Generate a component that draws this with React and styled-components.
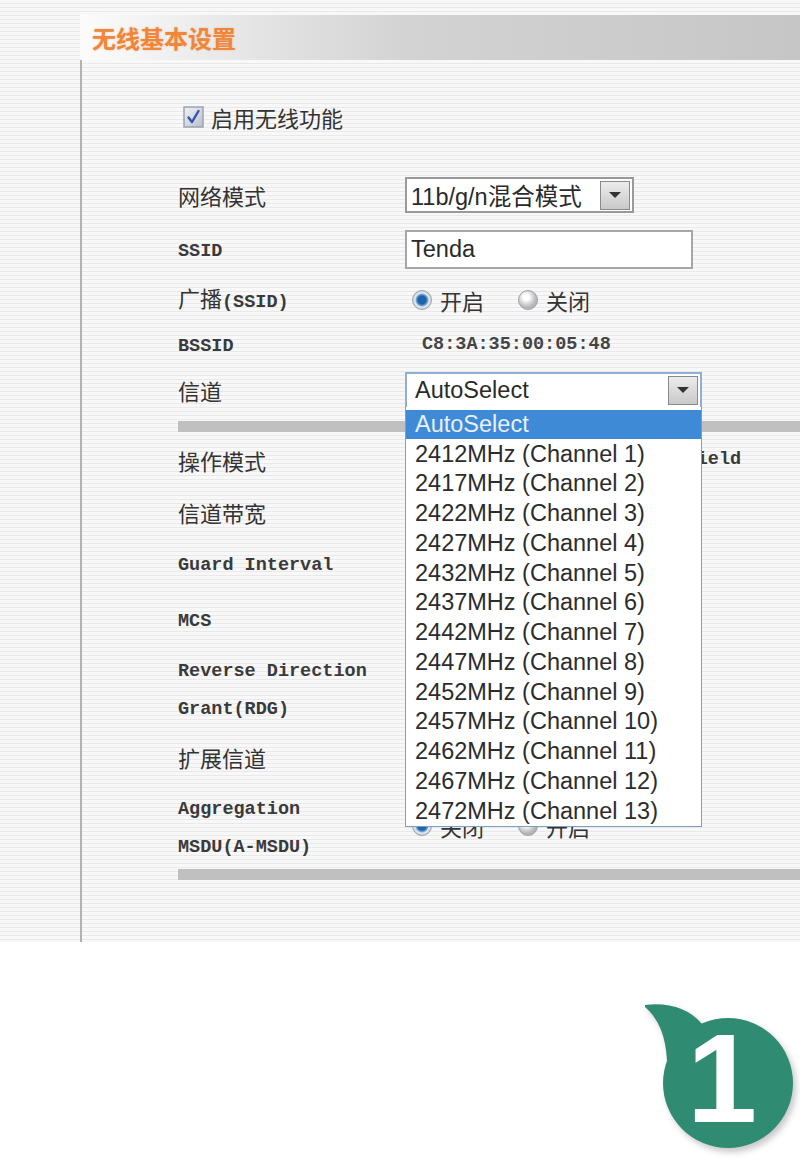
import React from 'react';
import styled, { createGlobalStyle } from 'styled-components';

const cjk = `"Noto Sans CJK SC", sans-serif`;
const mono = `"Liberation Mono", "Noto Sans CJK SC", monospace`;
const sans = `"Liberation Sans", "Noto Sans CJK SC", sans-serif`;

const GlobalStyle = createGlobalStyle`
	html, body {
		margin: 0;
		padding: 0;
		background: #fff;
	}
	body {
		width: 800px;
	}
`;

const Page = styled.div`
	width: 800px;
	height: 942px;
	padding-top: 15px;
	box-sizing: border-box;
	display: flex;
	flex-direction: column;
	background: repeating-linear-gradient(to bottom, #f8f8f8 0 3px, #e9e9e9 3px 4px);
`;

const Header = styled.div`
	margin-left: 80px;
	height: 45px;
	padding-left: 12px;
	display: flex;
	align-items: center;
	background: linear-gradient(to right, #fcfcfc 0%, #e4e4e4 25%, #d3d3d3 45%, #c6c6c6 100%);
`;

const Title = styled.h1`
	margin: 0;
	font: bold 24px ${cjk};
	color: #f0863a;
	text-shadow: 0 0 2px rgba(240, 134, 58, 0.45);
`;

const Body = styled.div`
	flex: 1;
	margin-left: 80px;
	border-left: 2px solid #b2b2b2;
	padding: 37px 0 0 96px;
`;

const EnableRow = styled.label`
	height: 40px;
	margin-bottom: 31px;
	padding-left: 5px;
	display: flex;
	align-items: center;
	gap: 7px;
	font: 22px ${cjk};
	color: #333;
`;

const Row = styled.div`
	height: ${(props) => props.h}px;
	display: grid;
	grid-template-columns: 227px 1fr;
	align-items: center;
`;

const Label = styled.div`
	font: 22px ${cjk};
	line-height: 32px;
	color: #333;
`;

const Latin = styled.span`
	font: bold 18.5px ${mono};
	line-height: 32px;
	color: #3a3a3a;
`;

const Control = styled.div`
	display: flex;
	align-items: center;
	position: relative;
`;

const Separator = styled.div`
	height: 11px;
	margin-top: ${(props) => props.top}px;
	background: #c0c0c0;
`;

const SelectBox = styled.div`
	position: relative;
	width: ${(props) => props.w}px;
	height: ${(props) => props.hgt}px;
	box-sizing: border-box;
	border: 2px solid ${(props) => (props.focus ? '#8fb0d2' : '#9a9a9a')};
	background: #fff;
	display: flex;
	align-items: center;
	justify-content: space-between;
	padding: 0 2px 0 ${(props) => props.pad || 4}px;
	font: 23.5px ${sans};
	color: #2a2a2a;
`;

const ArrowButton = styled.span`
	width: 30px;
	height: 29px;
	box-sizing: border-box;
	border: 1px solid #8a8a8a;
	background: linear-gradient(to bottom, #ececec, #c9c9c9);
	display: flex;
	align-items: center;
	justify-content: center;

	&::after {
		content: '';
		border-left: 6px solid transparent;
		border-right: 6px solid transparent;
		border-top: 6px solid #333;
	}
`;

const TextInput = styled.div`
	width: 288px;
	height: 39px;
	box-sizing: border-box;
	border: 2px solid #a6a6a6;
	background: #fff;
	display: flex;
	align-items: center;
	padding-left: 4px;
	font: 23.5px ${sans};
	color: #2a2a2a;
`;

const DropList = styled.ul`
	position: absolute;
	top: 100%;
	left: -2px;
	z-index: 10;
	width: calc(100% + 4px);
	margin: 0;
	padding: 3px 0 0;
	box-sizing: border-box;
	list-style: none;
	background: #fff;
	border: 1px solid #7f9fc2;
	border-top: none;
`;

const DropItem = styled.li`
	height: 29.75px;
	padding-left: 9px;
	display: flex;
	align-items: center;
	font: 23.5px ${sans};
	color: ${(props) => (props.active ? '#e8f0fb' : '#2c2c2c')};
	background: ${(props) => (props.active ? '#3f8ad6' : 'transparent')};
	white-space: nowrap;
`;

const Option = styled.span`
	display: flex;
	align-items: center;
	gap: 8px;
	margin-left: ${(props) => props.gap || 0}px;
	font: 22px ${cjk};
	color: #333;
`;

const Radio = styled.span`
	width: 20px;
	height: 20px;
	box-sizing: border-box;
	border-radius: 50%;
	border: 1px solid #9aa4ae;
	background: ${(props) =>
		props.checked
			? 'radial-gradient(circle, #1d64a8 0 4px, #5f9ad0 5.5px, #e4e9ef 7px, #bcc4cd 10px)'
			: 'radial-gradient(circle at 40% 35%, #ffffff 0 3px, #dedede 6px, #b6b6b6 10px)'};
`;

const Value = styled.span`
	margin-left: 17px;
	font: bold 18.5px ${mono};
	color: #444;
`;

const Footer = styled.div`
	height: 221px;
	padding-top: 53px;
	box-sizing: border-box;
	display: flex;
	justify-content: flex-end;
	align-items: flex-start;
`;

const Badge = styled.svg`
	filter: drop-shadow(3px 4px 3px rgba(0, 0, 0, 0.22));
`;

const CheckBox = () => (
	<svg width="21" height="22" viewBox="0 0 21 22">
		<defs>
			<linearGradient id="cb" x1="0" y1="0" x2="1" y2="1">
				<stop offset="0" stopColor="#f0f2f6" />
				<stop offset="1" stopColor="#b9c0cc" />
			</linearGradient>
		</defs>
		<rect x="1" y="1" width="19" height="20" fill="url(#cb)" stroke="#9da4b0" strokeWidth="1.5" />
		<path d="M5.5 11.5 L9 16 L15.5 5" fill="none" stroke="#3550b8" strokeWidth="2.4" strokeLinecap="round" strokeLinejoin="round" />
	</svg>
);

const channels = Array.from({ length: 13 }, (_, i) => ({
	id: i + 1,
	label: `${2412 + i * 5}MHz (Channel ${i + 1})`,
}));

const App = () => {
	return (
		<>
			<GlobalStyle />
			<Page>
				<Header>
					<Title>无线基本设置</Title>
				</Header>
				<Body>
					<EnableRow>
						<CheckBox />
						启用无线功能
					</EnableRow>

					<Row h={54}>
						<Label>网络模式</Label>
						<Control>
							<SelectBox w={229} hgt={36}>
								11b/g/n混合模式
								<ArrowButton />
							</SelectBox>
						</Control>
					</Row>
					<Row h={54}>
						<Label>
							<Latin>SSID</Latin>
						</Label>
						<Control>
							<TextInput>Tenda</TextInput>
						</Control>
					</Row>
					<Row h={48}>
						<Label>
							广播<Latin>(SSID)</Latin>
						</Label>
						<Control>
							<Option gap={7}>
								<Radio checked />
								开启
							</Option>
							<Option gap={34}>
								<Radio />
								关闭
							</Option>
						</Control>
					</Row>
					<Row h={40}>
						<Label>
							<Latin>BSSID</Latin>
						</Label>
						<Control>
							<Value>C8:3A:35:00:05:48</Value>
						</Control>
					</Row>
					<Row h={52}>
						<Label>信道</Label>
						<Control>
							<SelectBox w={297} hgt={37} pad={8} focus>
								AutoSelect
								<ArrowButton />
								<DropList>
									<DropItem active>AutoSelect</DropItem>
									{channels.map((c) => (
										<DropItem key={c.id}>{c.label}</DropItem>
									))}
								</DropList>
							</SelectBox>
						</Control>
					</Row>

					<Separator top={5} />

					<Row h={56}>
						<Label>操作模式</Label>
						<Control>
							<Option gap={7}>
								<Radio checked />
								混合模式
							</Option>
							<Option gap={63}>
								<Radio />
								<Latin>Green Field</Latin>
							</Option>
						</Control>
					</Row>
					<Row h={48}>
						<Label>信道带宽</Label>
						<Control>
							<Option gap={7}>
								<Radio />
								20
							</Option>
							<Option gap={34}>
								<Radio checked />
								20/40
							</Option>
						</Control>
					</Row>
					<Row h={54}>
						<Label>
							<Latin>Guard Interval</Latin>
						</Label>
						<Control>
							<Option gap={7}>
								<Radio />
								长
							</Option>
							<Option gap={34}>
								<Radio checked />
								自动
							</Option>
						</Control>
					</Row>
					<Row h={58}>
						<Label>
							<Latin>MCS</Latin>
						</Label>
						<Control>
							<SelectBox w={120} hgt={34}>
								Auto
								<ArrowButton />
							</SelectBox>
						</Control>
					</Row>
					<Row h={80}>
						<Label>
							<Latin>
								Reverse Direction
								<br />
								Grant(RDG)
							</Latin>
						</Label>
						<Control>
							<Option gap={7}>
								<Radio />
								关闭
							</Option>
							<Option gap={34}>
								<Radio checked />
								开启
							</Option>
						</Control>
					</Row>
					<Row h={58}>
						<Label>扩展信道</Label>
						<Control>
							<SelectBox w={200} hgt={34}>
								Auto
								<ArrowButton />
							</SelectBox>
						</Control>
					</Row>
					<Row h={80}>
						<Label>
							<Latin>
								Aggregation
								<br />
								MSDU(A-MSDU)
							</Latin>
						</Label>
						<Control>
							<Option gap={7}>
								<Radio checked />
								关闭
							</Option>
							<Option gap={34}>
								<Radio />
								开启
							</Option>
						</Control>
					</Row>

					<Separator top={3} />
				</Body>
			</Page>
			<Footer>
				<Badge width="160" height="168" viewBox="0 0 160 168">
					<path d="M5 10 C28 7 50 14 62 29 L27 66 C26 42 19 24 5 12 Z" fill="#2f8c73" />
					<circle cx="88" cy="88" r="65" fill="#2f8c73" />
					<text x="82" y="127" textAnchor="middle" fontFamily="Liberation Sans, Arial, sans-serif" fontWeight="bold" fontSize="126" fill="#fff">
						1
					</text>
				</Badge>
			</Footer>
		</>
	);
};

export default App;
